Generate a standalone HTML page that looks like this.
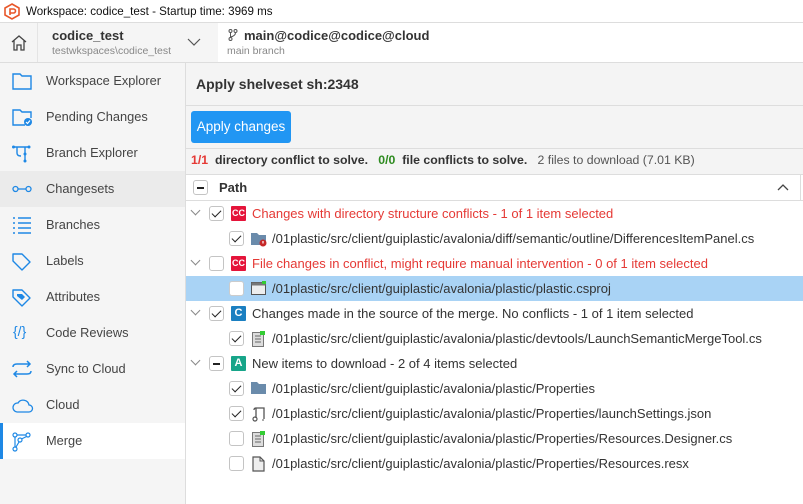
<!DOCTYPE html>
<html><head><meta charset="utf-8"><style>
*{margin:0;padding:0;box-sizing:border-box}
body{width:803px;height:504px;overflow:hidden;background:#fff;font-family:"Liberation Sans",sans-serif;color:#333;position:relative;font-size:13px}
.abs{position:absolute}
.title{left:0;top:0;width:803px;height:23px;background:#fff;border-bottom:1px solid #ddd}
.title span{position:absolute;left:26px;top:5px;font-size:11.6px;color:#111}
.hdr{left:0;top:23px;width:803px;height:40px;background:#fff;border-bottom:1px solid #ddd}
.side{left:0;top:63px;width:186px;height:441px;background:#f5f5f5;border-right:1px solid #ddd}
.item{position:absolute;left:0;width:185px;height:36px}
.item span{position:absolute;left:46px;top:10px;font-size:12.8px;color:#444}
.item svg{position:absolute;left:12px;top:9px}
.row{position:absolute;left:186px;width:617px;height:25px}
.row .t{position:absolute;top:5px;font-size:13px;color:#333;white-space:nowrap}
.cb{position:absolute;top:5px;width:15px;height:15px;border:1px solid #c4c4c4;border-radius:3px;background:#fff}
.cb.c::after{content:"";position:absolute;left:4px;top:1px;width:4px;height:8px;border:solid #222;border-width:0 1.6px 1.6px 0;transform:rotate(45deg)}
.cb.m::after{content:"";position:absolute;left:3px;top:6px;width:7px;height:2px;background:#222}
.chev{position:absolute;left:6px;top:6px;width:7px;height:7px;border:solid #888;border-width:0 1px 1px 0;transform:rotate(45deg)}
.badge{position:absolute;top:5px;width:15px;height:15px;color:#fff;font-size:9px;font-weight:bold;text-align:center;line-height:15px;border-radius:1px}
</style></head><body>
<div class="abs title">
<svg class="abs" style="left:4px;top:3px" width="16" height="17" viewBox="0 0 16 17"><path d="M8 1L15 5V12L8 16L1 12V5Z" fill="none" stroke="#e8572a" stroke-width="1.6"/><path d="M6 12V6H9.5A2 2 0 0 1 9.5 10H6" fill="none" stroke="#e8572a" stroke-width="1.6"/></svg>
<span>Workspace: codice_test - Startup time: 3969 ms</span></div>
<div class="abs hdr">
<div class="abs" style="left:0;top:0;width:38px;height:39px;background:#f5f5f5;border-right:1px solid #e4e4e4"></div>
<svg class="abs" style="left:10px;top:11px" width="18" height="17" viewBox="0 0 18 17"><path d="M2 8L9 2L16 8M4 6.5V16H7V11H11V16H14V6.5" fill="none" stroke="#444" stroke-width="1.3"/></svg>
<svg class="abs" style="left:38px;top:0" width="180" height="39"><path d="M0 0H205L215 19.5L205 39H0Z" fill="#f5f5f5"/><path d="M205 0L215 19.5L205 39" fill="none" stroke="#ddd"/><path d="M150 16L156 22L162 16" fill="none" stroke="#555" stroke-width="1.2"/></svg>
<div class="abs" style="left:52px;top:5px;font-size:13px;font-weight:bold;color:#333">codice_test</div>
<div class="abs" style="left:52px;top:22px;font-size:10.5px;color:#888">testwkspaces\codice_test</div>
<svg class="abs" style="left:228px;top:6px" width="10" height="12" viewBox="0 0 10 12"><circle cx="2.5" cy="2" r="1.5" fill="none" stroke="#555"/><circle cx="7.5" cy="2" r="1.5" fill="none" stroke="#555"/><circle cx="2.5" cy="10" r="1.5" fill="none" stroke="#555"/><path d="M2.5 3.5V8.5M7.5 3.5Q7.5 7 2.5 8" fill="none" stroke="#555"/></svg>
<div class="abs" style="left:244px;top:5px;font-size:13px;font-weight:bold;color:#333">main@codice@codice@cloud</div>
<div class="abs" style="left:227px;top:22px;font-size:10.5px;color:#888">main branch</div>
</div>
<div class="abs side">
<div class="item" style="top:0"><svg width="22" height="18" viewBox="0 0 22 18"><path d="M1 2H8L10 4H19V17H1Z" fill="none" stroke="#1e88e5" stroke-width="1.4"/></svg><span>Workspace Explorer</span></div>
<div class="item" style="top:36px"><svg width="22" height="18" viewBox="0 0 22 18"><path d="M13 17H1V2H8L10 4H19V10" fill="none" stroke="#1e88e5" stroke-width="1.4"/><circle cx="16" cy="14" r="4" fill="#1e88e5"/><path d="M14 14L15.5 15.5L18 12.5" stroke="#fff" fill="none" stroke-width="1.2"/></svg><span>Pending Changes</span></div>
<div class="item" style="top:72px"><svg width="22" height="20" viewBox="0 0 22 20"><path d="M1 3H17M5 3V9Q5 12 9 12M13 3V17" fill="none" stroke="#1e88e5" stroke-width="1.4"/><circle cx="1.5" cy="3" r="1.5" fill="#1e88e5"/><circle cx="17" cy="3" r="1.5" fill="#1e88e5"/><circle cx="13" cy="10" r="1.5" fill="#1e88e5"/><circle cx="13" cy="17" r="1.5" fill="#1e88e5"/></svg><span>Branch Explorer</span></div>
<div class="item" style="top:108px;background:#ebebeb"><svg width="22" height="18" viewBox="0 0 22 18"><circle cx="3.5" cy="9" r="2.5" fill="none" stroke="#1e88e5" stroke-width="1.3"/><circle cx="16.5" cy="9" r="2.5" fill="none" stroke="#1e88e5" stroke-width="1.3"/><path d="M6 9H14" stroke="#1e88e5" stroke-width="1.3"/></svg><span>Changesets</span></div>
<div class="item" style="top:144px"><svg width="22" height="18" viewBox="0 0 22 18"><path d="M1 2H3M6 2H19M1 7H3M6 7H19M1 12H3M6 12H19M1 17H3M6 17H19" stroke="#1e88e5" stroke-width="1.4"/></svg><span>Branches</span></div>
<div class="item" style="top:180px"><svg width="22" height="20" viewBox="0 0 22 20"><path d="M1 2H10L18 10L10 18L1 9Z" fill="none" stroke="#1e88e5" stroke-width="1.4" stroke-linejoin="round"/></svg><span>Labels</span></div>
<div class="item" style="top:216px"><svg width="22" height="20" viewBox="0 0 22 20"><path d="M1 2H10L18 10L10 18L1 9Z" fill="none" stroke="#1e88e5" stroke-width="1.4" stroke-linejoin="round"/><path d="M5 6H10L13 9L10 12L5 8Z" fill="#1e88e5"/></svg><span>Attributes</span></div>
<div class="item" style="top:252px"><span style="left:13px;top:8px;color:#1e88e5;font-size:14px">{/}</span><span>Code Reviews</span></div>
<div class="item" style="top:288px"><svg width="22" height="18" viewBox="0 0 22 18"><path d="M1 7Q1 4 5 4H18M15 1L18 4L15 7M19 11Q19 14 15 14H2M5 11L2 14L5 17" fill="none" stroke="#1e88e5" stroke-width="1.5"/></svg><span>Sync to Cloud</span></div>
<div class="item" style="top:324px"><svg width="22" height="18" viewBox="0 0 22 18"><path d="M5 16H17A3.5 3.5 0 0 0 17 9A6 6 0 0 0 6 7A4.5 4.5 0 0 0 5 16Z" fill="none" stroke="#1e88e5" stroke-width="1.3"/></svg><span>Cloud</span></div>
<div class="item" style="top:360px;background:#fff"><div class="abs" style="left:0;top:0;width:3px;height:36px;background:#1e88e5"></div><svg width="22" height="20" viewBox="0 0 22 20"><circle cx="3" cy="3" r="2" fill="none" stroke="#1e88e5" stroke-width="1.2"/><circle cx="16" cy="3" r="2" fill="none" stroke="#1e88e5" stroke-width="1.2"/><circle cx="3" cy="17" r="2" fill="none" stroke="#1e88e5" stroke-width="1.2"/><circle cx="8" cy="8" r="2" fill="none" stroke="#1e88e5" stroke-width="1.2"/><path d="M5 3H14M3 5V15M14.5 4.5L9.5 7M7 10L4 15" stroke="#1e88e5" stroke-width="1.2" fill="none"/></svg><span>Merge</span></div>
</div>
<div class="abs" style="left:186px;top:63px;width:617px;height:111px;background:#f4f4f4"></div>
<div class="abs" style="left:186px;top:105px;width:617px;height:1px;background:#ddd"></div>
<div class="abs" style="left:186px;top:148px;width:617px;height:1px;background:#ddd"></div>
<div class="abs" style="left:186px;top:174px;width:617px;height:1px;background:#ddd"></div>
<div class="abs" style="left:186px;top:200px;width:617px;height:1px;background:#ddd"></div>
<div class="abs" style="left:800px;top:174px;width:1px;height:26px;background:#ddd"></div>
<div class="abs" style="left:196px;top:76px;font-size:14px;font-weight:bold;color:#333">Apply shelveset sh:2348</div>
<div class="abs" style="left:191px;top:111px;width:100px;height:32px;background:#2196f3;border-radius:3px;color:#fff;font-size:13.5px;text-align:center;line-height:32px">Apply changes</div>
<div class="abs" style="left:191px;top:153px;font-size:12.3px;white-space:nowrap"><b style="color:#e53935">1/1</b> <b>&nbsp;directory conflict to solve.</b> &nbsp;&nbsp;<b style="color:#2e8b20">0/0</b> <b>&nbsp;file conflicts to solve.</b> &nbsp;&nbsp;<span style="color:#555">2 files to download (7.01 KB)</span></div>
<div class="row" style="top:175px"><div class="cb m" style="left:7px;top:5px"></div><div class="t" style="left:33px;top:5px;font-weight:bold">Path</div>
<svg class="abs" style="left:591px;top:8px" width="12" height="8"><path d="M1 7L6 2L11 7" fill="none" stroke="#444" stroke-width="1.3"/></svg></div>

<div class="row" style="top:201px"><div class="chev"></div><div class="cb c" style="left:23px"></div><div class="badge" style="left:45px;background:#e5143a">CC</div><div class="t" style="left:66px;color:#e53935">Changes with directory structure conflicts - 1 of 1 item selected</div></div>
<div class="row" style="top:226px"><div class="cb c" style="left:43px"></div><svg class="abs" style="left:65px;top:5px" width="18" height="16"><path d="M0 2H6L8 4H15V14H0Z" fill="#6a8bab"/><circle cx="12" cy="12" r="3.5" fill="#c62828"/><rect x="11.4" y="10" width="1.2" height="2.5" fill="#fff"/></svg><div class="t" style="left:86px">/01plastic/src/client/guiplastic/avalonia/diff/semantic/outline/DifferencesItemPanel.cs</div></div>
<div class="row" style="top:251px"><div class="chev"></div><div class="cb" style="left:23px"></div><div class="badge" style="left:45px;background:#e5143a">CC</div><div class="t" style="left:66px;color:#e53935">File changes in conflict, might require manual intervention - 0 of 1 item selected</div></div>
<div class="row" style="top:276px;background:#a9d3f5"><div class="cb" style="left:43px;border-color:#ccc"></div><svg class="abs" style="left:65px;top:5px" width="16" height="15"><rect x="0.5" y="1.5" width="14" height="12" fill="#eee" stroke="#555"/><rect x="0.5" y="1.5" width="14" height="3" fill="#777"/><rect x="11" y="0" width="4" height="3" fill="#3c3"/></svg><div class="t" style="left:86px">/01plastic/src/client/guiplastic/avalonia/plastic/plastic.csproj</div></div>
<div class="row" style="top:301px"><div class="chev"></div><div class="cb c" style="left:23px"></div><div class="badge" style="left:45px;background:#1a7fc1;font-size:11px">C</div><div class="t" style="left:66px">Changes made in the source of the merge. No conflicts - 1 of 1 item selected</div></div>
<div class="row" style="top:326px"><div class="cb c" style="left:43px"></div><svg class="abs" style="left:66px;top:5px" width="14" height="16"><rect x="0.5" y="1.5" width="11" height="14" fill="#ddd" stroke="#777"/><path d="M3 5H9M3 8H9M3 11H9" stroke="#666"/><rect x="8" y="0" width="5" height="4" fill="#3c3"/></svg><div class="t" style="left:86px">/01plastic/src/client/guiplastic/avalonia/plastic/devtools/LaunchSemanticMergeTool.cs</div></div>
<div class="row" style="top:351px"><div class="chev"></div><div class="cb m" style="left:23px"></div><div class="badge" style="left:45px;background:#17a589;font-size:11px">A</div><div class="t" style="left:66px">New items to download - 2 of 4 items selected</div></div>
<div class="row" style="top:376px"><div class="cb c" style="left:43px"></div><svg class="abs" style="left:65px;top:5px" width="16" height="14"><path d="M0 1H6L8 3H15V13H0Z" fill="#6a8bab"/></svg><div class="t" style="left:86px">/01plastic/src/client/guiplastic/avalonia/plastic/Properties</div></div>
<div class="row" style="top:401px"><div class="cb c" style="left:43px"></div><svg class="abs" style="left:66px;top:5px" width="14" height="16"><path d="M4 12V2H12V13M4 2Q2 2 2 4" fill="none" stroke="#555" stroke-width="1.3"/><circle cx="3" cy="13" r="2" fill="none" stroke="#555" stroke-width="1.2"/><path d="M10 14H12" stroke="#555"/></svg><div class="t" style="left:86px">/01plastic/src/client/guiplastic/avalonia/plastic/Properties/launchSettings.json</div></div>
<div class="row" style="top:426px"><div class="cb" style="left:43px"></div><svg class="abs" style="left:66px;top:5px" width="14" height="16"><rect x="0.5" y="1.5" width="11" height="14" fill="#ddd" stroke="#777"/><path d="M3 5H9M3 8H9M3 11H9" stroke="#666"/><rect x="8" y="0" width="5" height="4" fill="#3c3"/></svg><div class="t" style="left:86px">/01plastic/src/client/guiplastic/avalonia/plastic/Properties/Resources.Designer.cs</div></div>
<div class="row" style="top:451px"><div class="cb" style="left:43px"></div><svg class="abs" style="left:66px;top:5px" width="14" height="16"><path d="M1 1H8L12 5V15H1Z" fill="#eee" stroke="#555" stroke-width="1.2"/><path d="M8 1V5H12" fill="none" stroke="#555"/></svg><div class="t" style="left:86px">/01plastic/src/client/guiplastic/avalonia/plastic/Properties/Resources.resx</div></div>
</body></html>
